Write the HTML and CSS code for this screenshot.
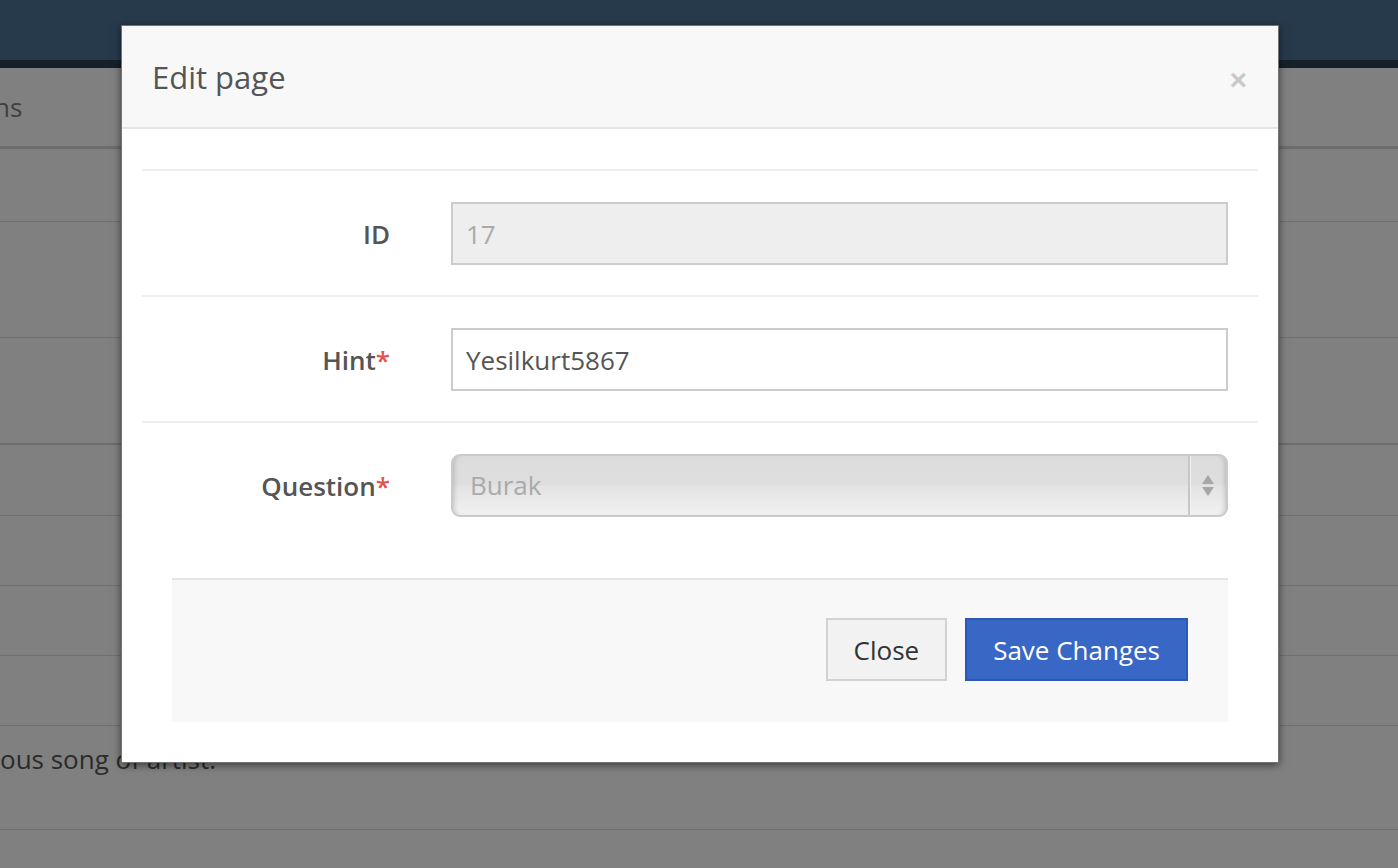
FILE: index.html
```html
<!DOCTYPE html>
<html lang="en">
<head>
<meta charset="utf-8">
<title>Edit page</title>
<link rel="stylesheet" href="styles.css">
</head>
<body>
<div class="page">
  <header class="navbar"></header>
  <div class="table">
    <div class="trow thead"><span class="th-text">ns</span></div>
    <div class="trow h72"></div>
    <div class="trow h115"></div>
    <div class="trow h105 thick"></div>
    <div class="trow h70"></div>
    <div class="trow h69"></div>
    <div class="trow h69"></div>
    <div class="trow h69"></div>
    <div class="trow h103 last"><span class="td-text">ous song of artist.</span></div>
  </div>
</div>

<div class="modal">
  <div class="modal-header">
    <h4 class="modal-title">Edit page</h4>
    <span class="close">×</span>
  </div>
  <div class="modal-body">
    <div class="form-row">
      <label class="label">ID</label>
      <div class="input disabled">17</div>
    </div>
    <div class="form-row">
      <label class="label">Hint<span class="req">*</span></label>
      <div class="input">Yesilkurt5867</div>
    </div>
    <div class="form-row last-row">
      <label class="label">Question<span class="req">*</span></label>
      <div class="select">
        <span class="select-value">Burak</span>
        <span class="spin"><span class="up"></span><span class="down"></span></span>
      </div>
    </div>
    <div class="modal-footer">
      <button class="btn btn-default">Close</button>
      <button class="btn btn-primary">Save Changes</button>
    </div>
  </div>
</div>
</body>
</html>
```
FILE: styles.css
```css
html, body {
  margin: 0;
  padding: 0;
}
body {
  background: #808080;
  font-family: "Open Sans", "Liberation Sans", sans-serif;
  width: 1398px;
  height: 868px;
  overflow: hidden;
  position: relative;
}
.page {
  display: flex;
  flex-direction: column;
}
.navbar {
  height: 60px;
  background: #273a4c;
  border-bottom: 8px solid #15202b;
}
.table {
  display: flex;
  flex-direction: column;
}
.trow {
  border-bottom: 1px solid #6f6f6f;
  box-sizing: border-box;
  font-size: 26px;
}
.thead {
  height: 81px;
  border-bottom: 3px solid #6d6d6d;
  display: flex;
  align-items: center;
  color: #404040;
}
.th-text { margin-left: -6px; }
.h72 { height: 73px; }
.h115 { height: 116px; }
.h105 { height: 106px; }
.thick { border-bottom: 2px solid #6d6d6d; height: 107px; }
.h70 { height: 71px; }
.h69 { height: 70px; }
.h103 { height: 104px; }
.last { padding-top: 15px; color: #2b2b2b; line-height: 36px; }

.modal {
  position: absolute;
  left: 121px;
  top: 25px;
  width: 1158px;
  box-sizing: border-box;
  background: #fff;
  border: 1px solid rgba(0,0,0,0.55);
  box-shadow: 0 2px 8px rgba(0,0,0,0.55);
}
.modal-header {
  height: 101px;
  background: #f8f8f8;
  border-bottom: 2px solid #e5e5e5;
  display: flex;
  align-items: center;
  justify-content: space-between;
  padding: 0 31px 0 30px;
}
.modal-title {
  margin: 0;
  font-size: 31px;
  font-weight: 500;
  color: #555;
}
.close {
  font-family: "Liberation Sans", Arial, sans-serif;
  font-size: 30px;
  font-weight: 700;
  line-height: 1;
  color: #c9c9c9;
  margin-top: 6px;
}
.modal-body {
  padding: 40px 20px 40px 20px;
}
.form-row {
  display: grid;
  grid-template-columns: 248px 1fr;
  column-gap: 61px;
  align-items: center;
  border-top: 2px solid #eee;
  padding: 31px 30px 30px 0;
}
.last-row {
  padding-bottom: 31px;
}
.label {
  text-align: right;
  font-size: 26px;
  font-weight: 600;
  color: #555;
}
.req { color: #e0534f; }
.input {
  height: 63px;
  box-sizing: border-box;
  border: 2px solid #ccc;
  padding: 0 13px;
  display: flex;
  align-items: center;
  font-size: 26px;
  color: #555;
  background: #fff;
}
.input.disabled {
  background: #eee;
  color: #aaa;
}
.select {
  height: 63px;
  box-sizing: border-box;
  border: 2px solid #cacaca;
  border-radius: 9px;
  display: flex;
  background: linear-gradient(#dcdcdc 0%, #dedede 48%, #e3e3e3 51%, #f1f1f1 100%);
  box-shadow: inset 5px 0 5px -4px rgba(0,0,0,0.18), inset -5px 0 5px -4px rgba(0,0,0,0.18);
}
.select-value {
  flex: 1;
  display: flex;
  align-items: center;
  padding-left: 17px;
  padding-bottom: 2px;
  font-size: 26px;
  color: #aaa;
}
.spin {
  width: 36px;
  border-left: 2px solid #c6c6c6;
  box-shadow: inset 1px 0 0 #f2f2f2;
  display: flex;
  flex-direction: column;
  align-items: center;
  justify-content: center;
  gap: 3px;
}
.up, .down {
  width: 0;
  height: 0;
  border-left: 6px solid transparent;
  border-right: 6px solid transparent;
}
.up { border-bottom: 9px solid #a6a6a6; }
.down { border-top: 9px solid #a6a6a6; }

.modal-footer {
  margin: 30px 30px 0 30px;
  background: #f8f8f8;
  border-top: 2px solid #e5e5e5;
  padding: 38px 40px 41px 0;
  display: flex;
  justify-content: flex-end;
  gap: 18px;
}
.btn {
  height: 63px;
  box-sizing: border-box;
  padding: 0 26px;
  font-family: "Open Sans", "Liberation Sans", sans-serif;
  font-size: 26px;
  border: 2px solid;
  border-radius: 0;
  cursor: pointer;
}
.btn-default {
  background: #f2f2f2;
  border-color: #d2d2d2;
  color: #333;
}
.btn-primary {
  background: #3967c5;
  border-color: #2c59b2;
  color: #fff;
}
```
